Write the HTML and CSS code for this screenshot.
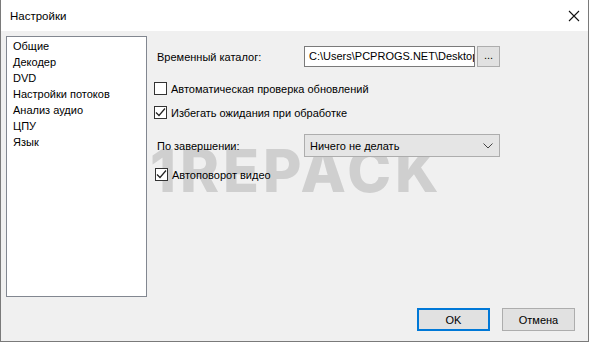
FILE: index.html
```html
<!DOCTYPE html>
<html lang="ru">
<head>
  <meta charset="UTF-8">
  <title>Настройки</title>
  <link rel="stylesheet" href="styles.css">
</head>
<body>
  <div class="window">
    <div class="titlebar">
      <span class="title">Настройки</span>
      <svg class="close" width="12" height="12" viewBox="0 0 12 12">
        <path d="M1 1 L11 11 M11 1 L1 11" stroke="#111" stroke-width="1.1" fill="none"/>
      </svg>
    </div>
    <div class="client">
      <div class="watermark">1REPACK</div>
      <div class="body">
        <ul class="list">
          <li>Общие</li>
          <li>Декодер</li>
          <li>DVD</li>
          <li>Настройки потоков</li>
          <li>Анализ аудио</li>
          <li>ЦПУ</li>
          <li>Язык</li>
        </ul>
        <div class="panel">
          <div class="row row-path">
            <span class="label">Временный каталог:</span>
            <div class="textbox">C:\Users\PCPROGS.NET\Desktop\</div>
            <button class="btn-small">...</button>
          </div>
          <label class="check row-cb1">
            <span class="box"></span>
            <span>Автоматическая проверка обновлений</span>
          </label>
          <label class="check row-cb2">
            <span class="box">
              <svg width="11" height="11" viewBox="0 0 11 11"><path d="M1 5.5 L4 8.5 L10 1.5" stroke="#222" stroke-width="1.2" fill="none"/></svg>
            </span>
            <span>Избегать ожидания при обработке</span>
          </label>
          <div class="row row-combo">
            <span class="label">По завершении:</span>
            <div class="combo">
              <span>Ничего не делать</span>
              <svg width="10" height="6" viewBox="0 0 10 6"><path d="M0.5 0.5 L5 5 L9.5 0.5" stroke="#444" stroke-width="1" fill="none"/></svg>
            </div>
          </div>
          <label class="check row-cb3">
            <span class="box">
              <svg width="11" height="11" viewBox="0 0 11 11"><path d="M1 5.5 L4 8.5 L10 1.5" stroke="#222" stroke-width="1.2" fill="none"/></svg>
            </span>
            <span>Автоповорот видео</span>
          </label>
        </div>
      </div>
      <div class="footer">
        <button class="btn btn-default">OK</button>
        <button class="btn">Отмена</button>
      </div>
    </div>
  </div>
</body>
</html>
```
FILE: styles.css
```css
body {
  margin: 0;
  background: #f0f0f0;
  font-family: "Liberation Sans", Arial, sans-serif;
  font-size: 11px;
  color: #000;
}

.window {
  width: 589px;
  height: 342px;
  box-sizing: border-box;
  border: 1px solid #7a7a7a;
  border-top: none;
  display: flex;
  flex-direction: column;
  overflow: hidden;
}

.titlebar {
  height: 31px;
  background: #fff;
  display: flex;
  align-items: center;
  justify-content: space-between;
  padding: 0 8px 0 9px;
  flex-shrink: 0;
}

.title {
  font-size: 11.5px;
  margin-top: 1px;
}

.client {
  flex: 1;
  position: relative;
  background: #f0f0f0;
  padding: 5px 0 0 5px;
  display: flex;
  flex-direction: column;
}

.watermark {
  position: absolute;
  left: 149px;
  top: 110px;
  font-family: Inter, sans-serif;
  font-weight: 800;
  font-size: 59px;
  line-height: 60px;
  color: #cfcfcf;
  letter-spacing: 4px;
}

.body {
  display: flex;
  position: relative;
  height: 261px;
}

.list {
  width: 141px;
  height: 261px;
  box-sizing: border-box;
  margin: 0;
  padding: 1px 0 0 6px;
  list-style: none;
  background: #fff;
  border: 1px solid #828790;
}

.list li {
  height: 16px;
  line-height: 16px;
}

.panel {
  margin-left: 6px;
  display: flex;
  flex-direction: column;
}

.row {
  display: flex;
  align-items: center;
}

.label {
  width: 151px;
  padding-left: 4px;
  box-sizing: border-box;
}

.row-path {
  margin-top: 10px;
  height: 21px;
}

.textbox {
  width: 171px;
  height: 21px;
  box-sizing: border-box;
  border: 1px solid #7a7a7a;
  background: #fff;
  padding-left: 4px;
  line-height: 19px;
  white-space: nowrap;
  overflow: hidden;
}

.btn-small {
  margin-left: 2px;
  width: 23px;
  height: 21px;
  border: 1px solid #adadad;
  background: #e1e1e1;
  font: inherit;
  padding: 0 0 4px;
  line-height: 12px;
}

.check {
  display: flex;
  align-items: center;
  height: 13px;
}

.check .box {
  width: 13px;
  height: 13px;
  box-sizing: border-box;
  border: 1px solid #333;
  background: #fff;
  margin-right: 4px;
  display: flex;
  align-items: center;
  justify-content: center;
}

.row-cb1 {
  margin-top: 15px;
  margin-left: 1px;
}

.row-cb2 {
  margin-top: 11px;
  margin-left: 1px;
}

.row-combo {
  margin-top: 15px;
  height: 23px;
}

.combo {
  width: 196px;
  height: 23px;
  box-sizing: border-box;
  border: 1px solid #adadad;
  background: #e5e5e5;
  display: flex;
  align-items: center;
  justify-content: space-between;
  padding: 0 6px 0 5px;
}

.row-cb3 {
  margin-top: 11px;
  margin-left: 2px;
}

.footer {
  display: flex;
  justify-content: flex-end;
  gap: 12px;
  margin-top: 11px;
  padding-right: 13px;
}

.btn {
  width: 73px;
  height: 23px;
  box-sizing: border-box;
  border: 1px solid #adadad;
  background: #e1e1e1;
  font: inherit;
  padding: 0;
}

.btn-default {
  border: 2px solid #0078d7;
}
```
